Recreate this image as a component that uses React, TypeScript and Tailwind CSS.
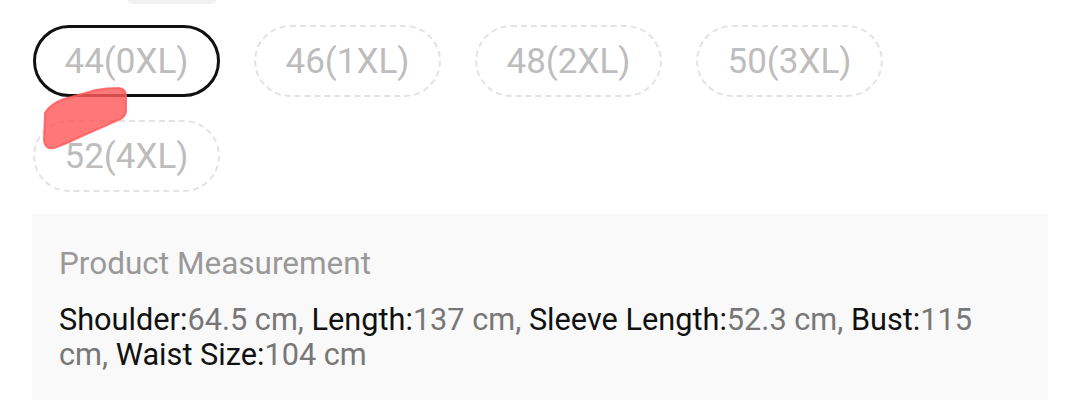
import { Fragment } from "react";

const sizes = ["44(0XL)", "46(1XL)", "48(2XL)", "50(3XL)", "52(4XL)"];

const measurements = [
  { label: "Shoulder", value: "64.5 cm" },
  { label: "Length", value: "137 cm" },
  { label: "Sleeve Length", value: "52.3 cm" },
  { label: "Bust", value: "115 cm" },
  { label: "Waist Size", value: "104 cm" },
];

function SizePill({ label, selected }: { label: string; selected: boolean }) {
  return (
    <div
      className={
        selected
          ? "w-[187px] h-[72px] rounded-full border-[3px] border-[#111] flex items-center justify-center"
          : "w-[187px] h-[72px] rounded-full border-2 border-dashed border-[#e3e3e3] flex items-center justify-center"
      }
    >
      <span className="text-[35px] leading-none text-[#bdbdbd]">{label}</span>
    </div>
  );
}

export default function App() {
  return (
    <div
      className="relative w-[1080px] h-[414px] overflow-hidden bg-white"
      style={{ fontFamily: "Roboto, 'Noto Sans', sans-serif" }}
    >
      <div className="ml-[128px] w-[88px] h-[4px] rounded-b-full bg-[#f2f2f2]" />

      <div className="px-[33px] pt-[21px] flex flex-wrap gap-x-[34px] gap-y-[23px]">
        {sizes.map((s, i) => (
          <SizePill key={s} label={s} selected={i === 0} />
        ))}
      </div>

      <div className="mt-[22px] mx-[32px] bg-[#f9f9f9] pl-[27px] pr-[36px] pt-[32px] pb-[28px]">
        <p className="text-[31.5px] leading-[36px] text-[#999]">
          Product Measurement
        </p>
        <p className="mt-5 text-[30.7px] leading-[35px] text-[#777]">
          {measurements.map((m, i) => (
            <Fragment key={m.label}>
              <span className="text-[#111]">{m.label}:</span>
              <span>
                {m.value}
                {i < measurements.length - 1 ? "," : ""}
              </span>{" "}
            </Fragment>
          ))}
        </p>
      </div>

      {/* red marker scribble over the pills */}
      <svg
        className="absolute left-0 top-0 pointer-events-none"
        width="160"
        height="170"
        viewBox="0 0 160 170"
      >
        <path
          d="M45 113 Q50 104 64 99 L96 90 Q106 88 119 88 Q126 89 126 96 L126 112 Q125 118 116 121 L82 136 Q68 143 54 148 Q45 150 44 140 Z"
          fill="#ff5a5a"
          fillOpacity="0.82"
          stroke="#ff5a5a"
          strokeOpacity="0.82"
          strokeWidth="2"
          strokeLinejoin="round"
        />
      </svg>
    </div>
  );
}
